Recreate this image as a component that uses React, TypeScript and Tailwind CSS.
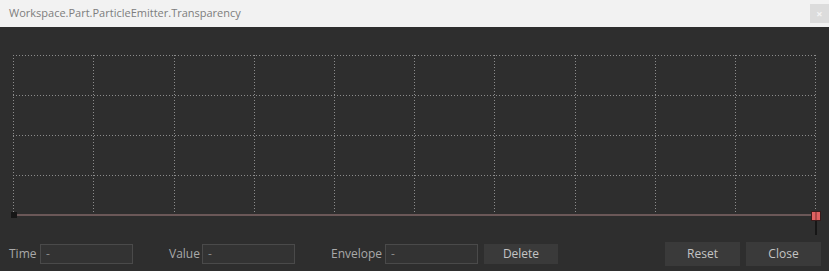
import React from 'react';

const FONT = { fontFamily: '"Open Sans", "Noto Sans", "Liberation Sans", sans-serif' };

// column x positions of the dotted grid, relative to the chart svg
const COLS = [13, 93, 174, 254, 334, 414, 494, 575, 655, 735, 815];
const ROWS = [28, 68, 108, 148];

function CurveChart() {
  return (
    <svg width={829} height={210} className="block">
      {/* horizontal grid */}
      {ROWS.map((y) => (
        <line key={'h' + y} x1={13} x2={817} y1={y + 0.5} y2={y + 0.5} stroke="#8c8c8c" strokeDasharray="1 2" />
      ))}
      {/* vertical grid */}
      {COLS.map((x) => (
        <line key={'v' + x} x1={x + 0.5} x2={x + 0.5} y1={28} y2={185} stroke="#8c8c8c" strokeDasharray="1 2" />
      ))}
      {/* curve */}
      <rect x={14} y={187} width={800} height={2} fill="#6b5858" />
      {/* left keypoint */}
      <rect x={11} y={185} width={6} height={6} fill="#161616" />
      {/* right handle */}
      <rect x={815} y={193} width={2} height={15} fill="#161616" />
      <rect x={811} y={184} width={10} height={10} fill="#3a1c1c" />
      <rect x={812} y={185} width={8} height={8} fill="#e26262" />
      <rect x={815.5} y={185} width={1} height={8} fill="#7a2c2c" />
    </svg>
  );
}

function Field({ label, labelWidth }: { label: string; labelWidth: string }) {
  return (
    <div className="flex items-center">
      <span className={`${labelWidth} text-[12px] text-[#a9a9a9]`}>{label}</span>
      <div className="w-[93px] h-[20px] border border-[#4a4a4a] bg-[#333333] flex items-center pl-[5px] text-[12px] text-[#8a8a8a]">
        -
      </div>
    </div>
  );
}

export default function App() {
  return (
    <div className="w-[829px] h-[271px] flex flex-col bg-[#2e2e2e] overflow-hidden" style={FONT}>
      {/* Title bar */}
      <div className="h-[27px] bg-[#f2f2f2] flex items-start justify-between">
        <span className="pl-[9px] pt-[4px] text-[11px] text-[#7d7d7d] leading-[17px]">
          Workspace.Part.ParticleEmitter.Transparency
        </span>
        <div className="mt-[4px] w-[19px] h-[19px] bg-[#dcdcdc] flex items-center justify-center text-[#f4f4f4] text-[11px] font-bold leading-none">
          ×
        </div>
      </div>

      {/* Chart */}
      <CurveChart />

      {/* Controls */}
      <div className="flex-1 flex items-center pl-[9px] pr-[8px]">
        <Field label="Time" labelWidth="w-[31px]" />
        <div className="ml-[36px]">
          <Field label="Value" labelWidth="w-[33px]" />
        </div>
        <div className="ml-[36px]">
          <Field label="Envelope" labelWidth="w-[54px]" />
        </div>
        <button className="ml-[6px] w-[74px] h-[20px] bg-[#3a3a3a] text-[12px] text-[#c4c4c4]">Delete</button>
        <div className="flex-1" />
        <button className="w-[75px] h-[24px] bg-[#3a3a3a] text-[12px] text-[#c4c4c4]">Reset</button>
        <button className="ml-[6px] w-[75px] h-[24px] bg-[#3a3a3a] text-[12px] text-[#c4c4c4]">Close</button>
      </div>
    </div>
  );
}
